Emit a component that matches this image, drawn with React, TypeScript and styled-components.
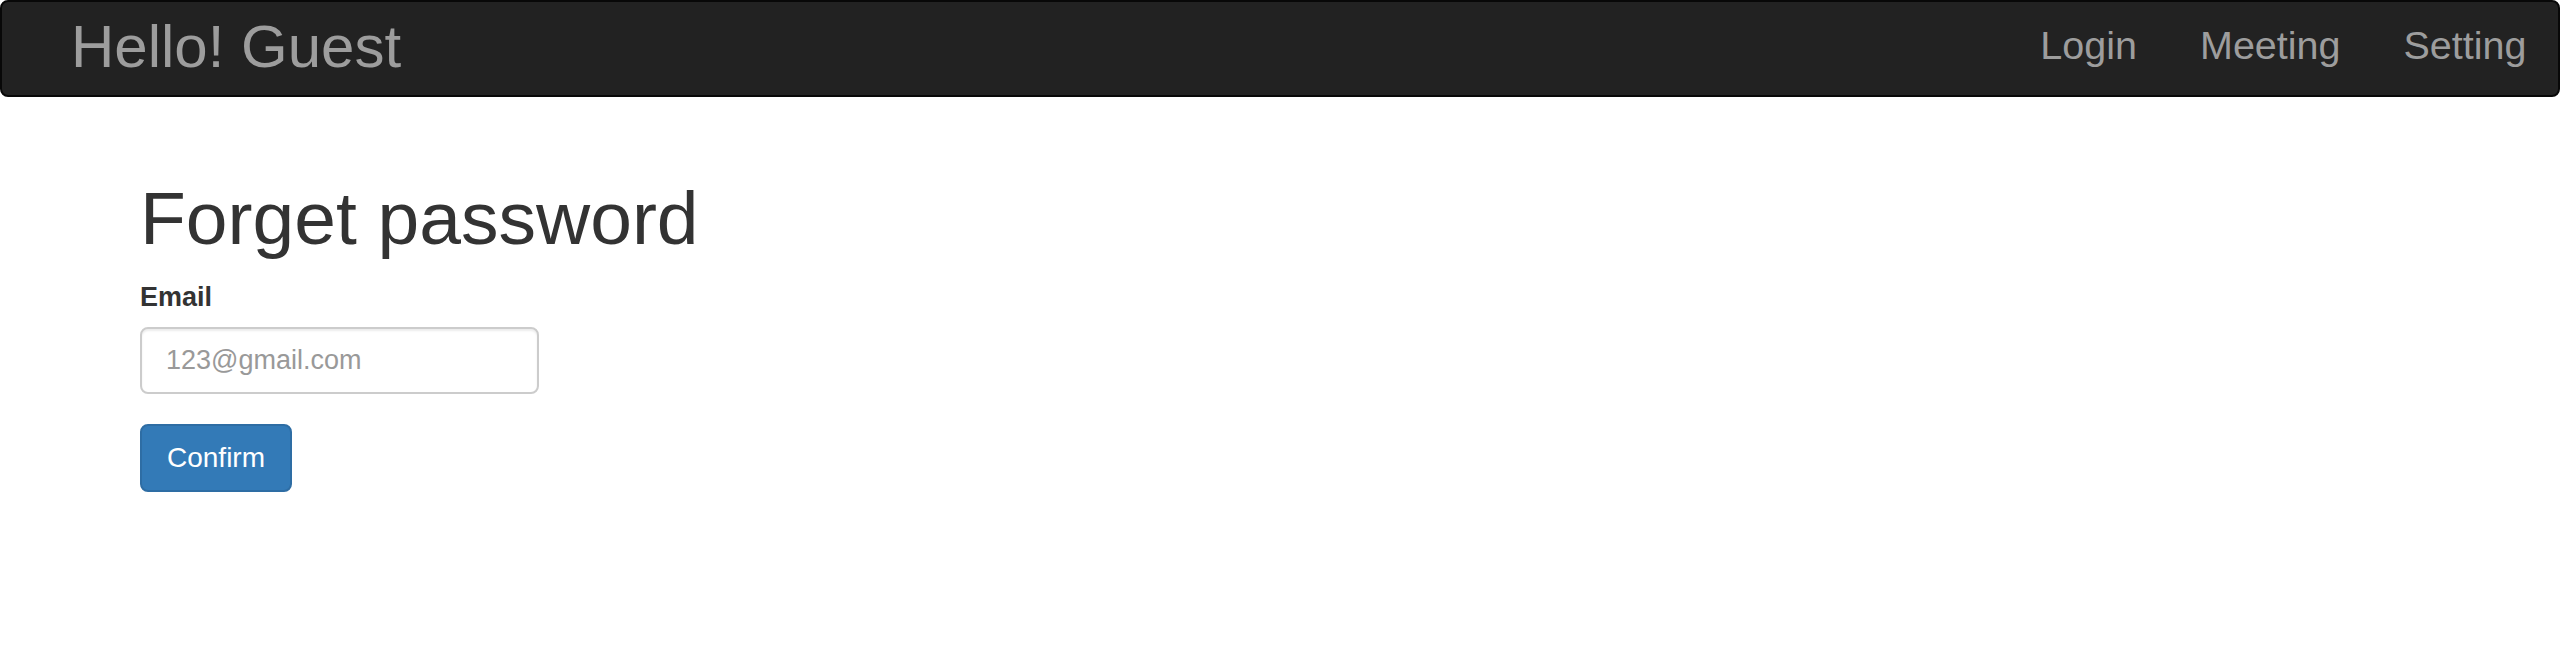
import React from "react";
import styled, { createGlobalStyle } from "styled-components";

const GlobalStyle = createGlobalStyle`
  html, body {
    margin: 0;
    padding: 0;
    background: #ffffff;
    font-family: "Liberation Sans", Arial, Helvetica, sans-serif;
  }
  * { box-sizing: border-box; }
`;

const Navbar = styled.nav`
  display: flex;
  align-items: flex-start;
  justify-content: space-between;
  height: 97px;
  background: #222222;
  border: 2px solid #080808;
  border-radius: 8px;
`;

const Brand = styled.a`
  margin-top: 15px;
  margin-left: 69px;
  font-size: 60px;
  line-height: 60px;
  color: #9d9d9d;
  text-decoration: none;
`;

const NavList = styled.ul`
  display: flex;
  list-style: none;
  margin: 0;
  padding: 0;
  margin-top: 23px;
`;

const NavLink = styled.a`
  display: block;
  padding: 0 31.5px;
  font-size: 39.5px;
  line-height: 40px;
  color: #9d9d9d;
  text-decoration: none;
`;

const Main = styled.main`
  padding: 80px 0 0 140px;
`;

const Title = styled.h1`
  margin: 0;
  font-size: 75px;
  line-height: 82.5px;
  font-weight: 400;
  color: #333333;
`;

const Form = styled.form`
  display: flex;
  flex-direction: column;
  align-items: flex-start;
  margin-top: 18px;
`;

const Label = styled.label`
  font-size: 27px;
  line-height: 38px;
  font-weight: 700;
  color: #333333;
`;

const Input = styled.input`
  margin-top: 11px;
  width: 399px;
  height: 67px;
  padding: 0 24px;
  border: 2px solid #cccccc;
  border-radius: 8px;
  font-family: inherit;
  font-size: 27px;
  color: #555555;
  box-shadow: inset 0 2px 2px rgba(0, 0, 0, 0.075);
  outline: none;
  &::placeholder {
    color: #999999;
  }
`;

const Button = styled.button`
  margin-top: 30px;
  width: 152px;
  height: 68px;
  padding: 0;
  background: #337ab7;
  border: 2px solid #2e6da4;
  border-radius: 8px;
  color: #ffffff;
  font-family: inherit;
  font-size: 28px;
  cursor: pointer;
`;

export default function App() {
  return (
    <>
      <GlobalStyle />
      <Navbar>
        <Brand href="#">Hello! Guest</Brand>
        <NavList>
          <li><NavLink href="#">Login</NavLink></li>
          <li><NavLink href="#">Meeting</NavLink></li>
          <li><NavLink href="#">Setting</NavLink></li>
        </NavList>
      </Navbar>
      <Main>
        <Title>Forget password</Title>
        <Form onSubmit={(e) => e.preventDefault()}>
          <Label htmlFor="email">Email</Label>
          <Input id="email" type="email" placeholder="123@gmail.com" />
          <Button type="submit">Confirm</Button>
        </Form>
      </Main>
    </>
  );
}
